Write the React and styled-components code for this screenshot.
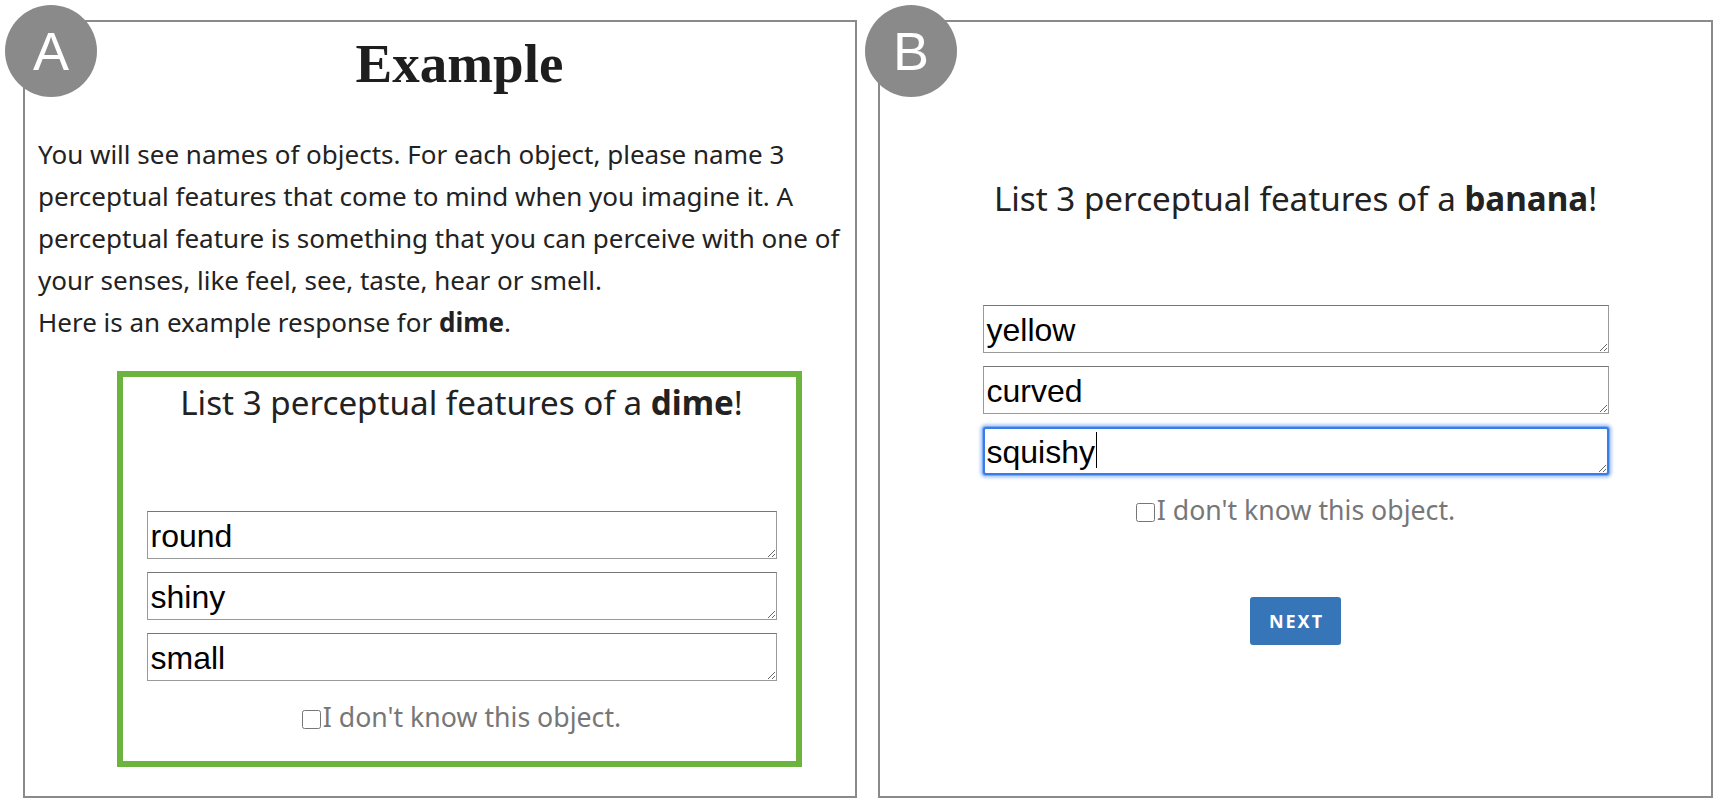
import React from "react";
import styled, { createGlobalStyle } from "styled-components";

const Global = createGlobalStyle`
  html, body { margin: 0; padding: 0; background: #ffffff; }
  * { box-sizing: border-box; }
`;

const Page = styled.div`
  display: flex;
  align-items: flex-start;
  gap: 21px;
  padding: 20px 0 0 23px;
  width: 1717px;
  height: 802px;
  overflow: hidden;
  font-family: "Noto Sans", "Open Sans", sans-serif;
  color: #222;
`;

const Panel = styled.section`
  position: relative;
  width: ${(p) => p.$w}px;
  height: 778px;
  border: 2px solid #8a8a8a;
  display: flex;
  flex-direction: column;
  align-items: ${(p) => (p.$center ? "center" : "flex-start")};
  padding-left: ${(p) => p.$padLeft || 0}px;
`;

const Badge = styled.div`
  position: absolute;
  left: ${(p) => p.$left}px;
  top: -17px;
  width: 92px;
  height: 92px;
  border-radius: 50%;
  background: #8a8a8a;
  color: #ffffff;
  display: flex;
  align-items: center;
  justify-content: center;
  font-family: "Liberation Sans", Arial, sans-serif;
  font-size: 54px;
  line-height: 1;
  z-index: 2;
`;

const Content = styled.div`
  width: 843px;
  flex-shrink: 0;
  display: flex;
  flex-direction: column;
  align-items: center;
`;

const Heading = styled.h1`
  margin: 10px 0 0;
  font-family: "Liberation Serif", "Times New Roman", serif;
  font-weight: 700;
  font-size: 55px;
  line-height: normal;
  color: #1e1e1e;
`;

const Intro = styled.p`
  align-self: stretch;
  margin: 38px 0 0;
  font-size: 26px;
  line-height: 42px;
  color: #222;
`;

const ExampleBox = styled.div`
  margin-top: 28px;
  width: 685px;
  border: 6px solid #6db33f;
  padding: 4px 0 26px 4px;
  display: flex;
  flex-direction: column;
  align-items: center;
`;

const Prompt = styled.div`
  margin-top: ${(p) => p.$top || 0}px;
  font-size: 33.2px;
  line-height: 44px;
  color: #222;
  white-space: nowrap;
`;

const Fields = styled.div`
  margin-top: ${(p) => p.$top}px;
  display: flex;
  flex-direction: column;
  gap: 13px;
`;

const FieldWrap = styled.div`
  position: relative;
`;

const Field = styled.textarea`
  display: block;
  width: ${(p) => p.$w}px;
  height: 48px;
  margin: 0;
  padding: 6px 3px 0;
  border: 1px solid #9a9a9a;
  border-top-color: #767676;
  border-radius: 0;
  font-family: "Liberation Sans", Arial, sans-serif;
  font-size: 32px;
  line-height: normal;
  color: #000;
  background: #fff;
  resize: vertical;
  overflow: hidden;
  outline: none;
  ${(p) =>
    p.$focused &&
    `
    border: 2px solid #3a7ce8;
    border-radius: 3px;
    padding: 5px 2px 0;
    box-shadow: 0 0 0 1px rgba(120, 165, 240, 0.9), 0 0 3px 3px rgba(120, 165, 240, 0.55);
  `}
  &:focus {
    outline: none;
  }
`;

const Caret = styled.span`
  position: absolute;
  left: ${(p) => p.$x}px;
  top: 5px;
  width: 1.5px;
  height: 36px;
  background: #000;
  pointer-events: none;
`;

const CheckRow = styled.label`
  margin-top: ${(p) => p.$top}px;
  display: flex;
  align-items: center;
  font-size: 26.7px;
  line-height: normal;
  color: #777;
  white-space: nowrap;
`;

const Check = styled.input`
  width: 19px;
  height: 19px;
  margin: 6px 2px 0 0;
  accent-color: #888;
`;

const NextButton = styled.button`
  margin-top: 69px;
  width: 91px;
  height: 48px;
  border: none;
  border-radius: 3px;
  background: #3775b9;
  color: #ffffff;
  font-family: "Noto Sans", "Open Sans", sans-serif;
  font-weight: 700;
  font-size: 18px;
  letter-spacing: 2px;
  padding: 0 0 0 2px;
  cursor: pointer;
`;

export default function App() {
  return (
    <>
      <Global />
      <Page>
        <Panel $w={834} $padLeft={13}>
          <Badge $left={-20}>A</Badge>
          <Content>
            <Heading>Example</Heading>
            <Intro>
              You will see names of objects. For each object, please name 3
              perceptual features that come to mind when you imagine it. A
              perceptual feature is something that you can perceive with one of
              your senses, like feel, see, taste, hear or smell.
              <br />
              Here is an example response for <b>dime</b>.
            </Intro>
            <ExampleBox>
              <Prompt>
                List 3 perceptual features of a <b>dime</b>!
              </Prompt>
              <Fields $top={86}>
                <Field $w={630} defaultValue="round" />
                <Field $w={630} defaultValue="shiny" />
                <Field $w={630} defaultValue="small" />
              </Fields>
              <CheckRow $top={17}>
                <Check type="checkbox" />I don't know this object.
              </CheckRow>
            </ExampleBox>
          </Content>
        </Panel>
        <Panel $w={835} $center>
          <Badge $left={-15}>B</Badge>
          <Prompt $top={155}>
            List 3 perceptual features of a <b>banana</b>!
          </Prompt>
          <Fields $top={84}>
            <Field $w={626} defaultValue="yellow" />
            <Field $w={626} defaultValue="curved" />
            <FieldWrap>
              <Field $w={626} $focused defaultValue="squishy" />
              <Caret $x={113} />
            </FieldWrap>
          </Fields>
          <CheckRow $top={16}>
            <Check type="checkbox" />I don't know this object.
          </CheckRow>
          <NextButton>NEXT</NextButton>
        </Panel>
      </Page>
    </>
  );
}
